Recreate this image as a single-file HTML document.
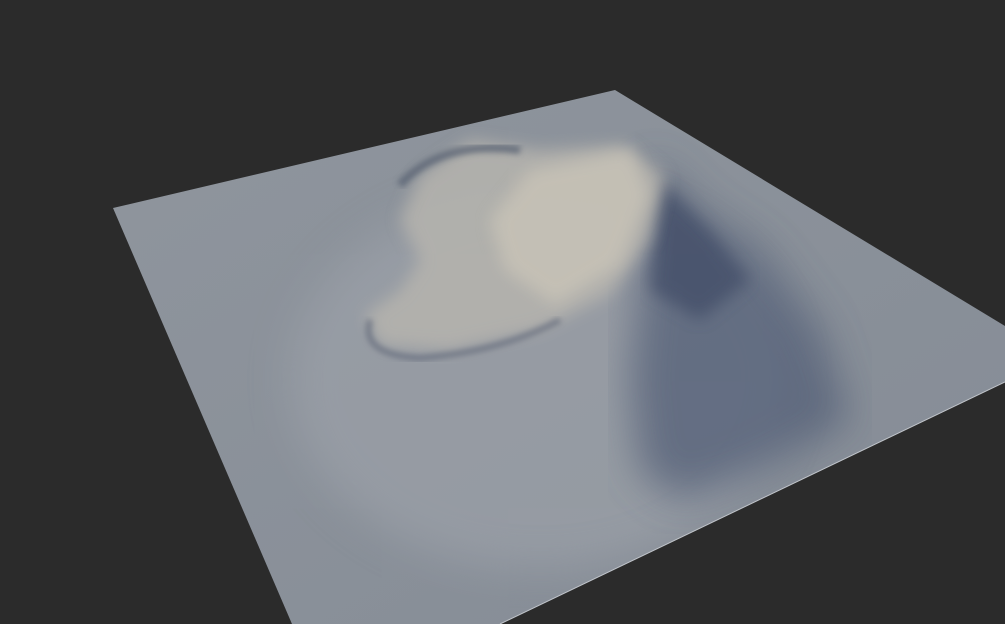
<!DOCTYPE html>
<html><head><style>
html,body{margin:0;padding:0;background:#2b2b2b;width:1005px;height:624px;overflow:hidden}
svg{display:block}
</style></head><body>
<svg width="1005" height="624" viewBox="0 0 1005 624" xmlns="http://www.w3.org/2000/svg">
<defs>
<linearGradient id="base" x1="0" y1="0" x2="1" y2="1">
<stop offset="0" stop-color="#8f959d"/>
<stop offset="1" stop-color="#858c96"/>
</linearGradient>
<clipPath id="c"><polygon points="113,208 615,90 1005,326 1005,382 500,624 292,624"/></clipPath>
<filter id="b20"><feGaussianBlur stdDeviation="20"/></filter>
<filter id="b10"><feGaussianBlur stdDeviation="8"/></filter>
<filter id="b4"><feGaussianBlur stdDeviation="3"/></filter>
</defs>
<polygon points="113,208 615,90 1005,326 1005,382 500,624 292,624" fill="url(#base)"/>
<g clip-path="url(#c)">
<ellipse cx="540" cy="380" rx="250" ry="190" fill="#9ea3aa" opacity="0.6" filter="url(#b20)"/>
<path d="M650,160 L700,210 L760,250 L820,330 L850,420 L760,470 L680,500 L640,470 L630,380 L640,280 Z" fill="#4f5b74" opacity="0.7" filter="url(#b20)"/>
<path d="M660,180 L710,230 L750,280 L700,320 L650,290 Z" fill="#3f4b66" opacity="0.7" filter="url(#b10)"/>
<path d="M420,175 L470,140 L540,150 L625,145 L665,175 L650,240 L610,295 L540,330 L450,350 L380,345 L365,315 L400,290 L420,260 L400,220 Z" fill="#b6b4ae" opacity="0.85" filter="url(#b10)"/>
<path d="M530,170 L630,150 L650,195 L620,265 L555,305 L505,270 L490,220 Z" fill="#cac5b8" opacity="0.75" filter="url(#b10)"/>
<path d="M400,185 Q440,140 520,150" stroke="#555e70" stroke-width="8" fill="none" filter="url(#b4)" opacity="0.7"/>
<path d="M370,320 Q360,355 420,358 Q500,352 560,320" stroke="#5a6274" stroke-width="6" fill="none" filter="url(#b4)" opacity="0.6"/>
</g>
<line x1="1005" y1="382" x2="500" y2="624" stroke="#c0c4ca" stroke-width="1"/>
</svg>
</body></html>
